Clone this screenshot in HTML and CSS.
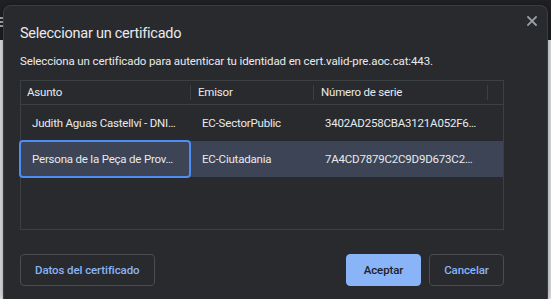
FILE: index.html
```html
<!DOCTYPE html>
<html lang="es">

<head>
  <meta charset="UTF-8">
  <meta name="viewport" content="width=device-width, initial-scale=1.0">
  <title>Seleccionar un certificado</title>
  <link rel="stylesheet" href="styles.css">
</head>

<body>
  <div class="page">
    <div class="topbar">
      <svg class="menu-icon" width="6" height="12" viewBox="0 0 6 12">
        <path d="M-3 2h6M-3 6h6M-3 10h6" stroke="#e8eaed" stroke-width="1.4" />
      </svg>
    </div>
    <div class="content"></div>
  </div>

  <div class="dialog">
    <button class="close" aria-label="Cerrar">
      <svg width="10" height="10" viewBox="0 0 10 10">
        <path d="M1 1L9 9M9 1L1 9" stroke="#9aa0a6" stroke-width="1.8" stroke-linecap="square" />
      </svg>
    </button>

    <h1>Seleccionar un certificado</h1>
    <p class="subtitle">Selecciona un certificado para autenticar tu identidad en cert.valid-pre.aoc.cat:443.</p>

    <div class="cert-table">
      <div class="head">
        <div class="head-cell">Asunto</div>
        <div class="head-cell sep">Emisor</div>
        <div class="head-cell sep">Número de serie</div>
        <div class="head-cell sep"></div>
      </div>
      <div class="row">
        <div class="cell">Judith Aguas Castellví - DNI…</div>
        <div class="cell">EC-SectorPublic</div>
        <div class="cell">3402AD258CBA3121A052F6…</div>
        <div class="cell"></div>
      </div>
      <div class="row selected">
        <div class="cell focused">Persona de la Peça de Prov…</div>
        <div class="cell">EC-Ciutadania</div>
        <div class="cell">7A4CD7879C2C9D9D673C2…</div>
        <div class="cell"></div>
      </div>
    </div>

    <div class="actions">
      <button class="btn">Datos del certificado</button>
      <div class="spacer"></div>
      <button class="btn primary">Aceptar</button>
      <button class="btn">Cancelar</button>
    </div>
  </div>
</body>

</html>
```

FILE: styles.css
```css
body {
  margin: 0;
  font-family: 'Roboto', 'Liberation Sans', sans-serif;
  background: #ffffff;
  overflow: hidden;
}

.page {
  height: 299px;
  display: flex;
  flex-direction: column;
}

.topbar {
  height: 40px;
  background: #202124;
  padding-top: 16px;
  box-sizing: border-box;
}

.menu-icon {
  display: block;
}

.content {
  flex: 1;
  background: #f1f3f4;
}

/* dialog sits over the page */
.dialog {
  position: absolute;
  left: 3px;
  top: 5px;
  width: 545px;
  height: 294px;
  box-sizing: border-box;
  background: #292a2d;
  border: 1px solid #3c3d41;
  border-bottom: none;
  border-radius: 8px 8px 0 0;
  padding: 18px 43px 0 16px;
  color: #e8eaed;
  box-shadow: 0 2px 10px rgba(0, 0, 0, 0.5);
}

.close {
  position: absolute;
  top: 4px;
  right: 4px;
  width: 22px;
  height: 22px;
  padding: 0;
  border: none;
  background: none;
  display: flex;
  align-items: center;
  justify-content: center;
}

h1 {
  margin: 0;
  font-size: 14.5px;
  letter-spacing: -0.25px;
  line-height: 20px;
  font-weight: 400;
  color: #e8eaed;
}

.subtitle {
  margin: 9px 0 0;
  font-size: 11.5px;
  letter-spacing: -0.12px;
  line-height: 16px;
}

.cert-table {
  margin-top: 11px;
  height: 150px;
  box-sizing: border-box;
  border: 1px solid #3c4043;
  font-size: 11.5px;
  letter-spacing: -0.2px;
}

.head,
.row {
  display: grid;
  grid-template-columns: 169px 123px 174px 1fr;
}

.head {
  height: 24px;
  box-sizing: border-box;
  padding: 4px 0;
  border-bottom: 1px solid #3c4043;
}

.head-cell {
  line-height: 15px;
  padding-left: 6px;
  white-space: nowrap;
}

.head-cell.sep {
  border-left: 1px solid #3c4043;
  padding-left: 7px;
}

.row {
  height: 36px;
}

.cell {
  display: flex;
  align-items: center;
  padding-left: 11px;
  white-space: nowrap;
  overflow: hidden;
}

.cell+.cell {
  padding-left: 12px;
}

.row.selected {
  background: #3c4455;
}

.cell.focused {
  outline: 2px solid #4c8df6;
  outline-offset: -1px;
  border-radius: 3px;
  margin-left: -1px;
  padding-left: 12px;
}

.actions {
  display: flex;
  gap: 8px;
  margin-top: 24px;
}

.spacer {
  flex: 1;
}

.btn {
  height: 32px;
  min-width: 75px;
  padding: 0 14px;
  font-family: inherit;
  font-size: 11.5px;
  letter-spacing: -0.1px;
  font-weight: 500;
  color: #8ab4f8;
  background: transparent;
  border: 1px solid #4a4c50;
  border-radius: 4px;
}

.btn.primary {
  background: #8ab4f8;
  border-color: #8ab4f8;
  color: #202124;
}
```
